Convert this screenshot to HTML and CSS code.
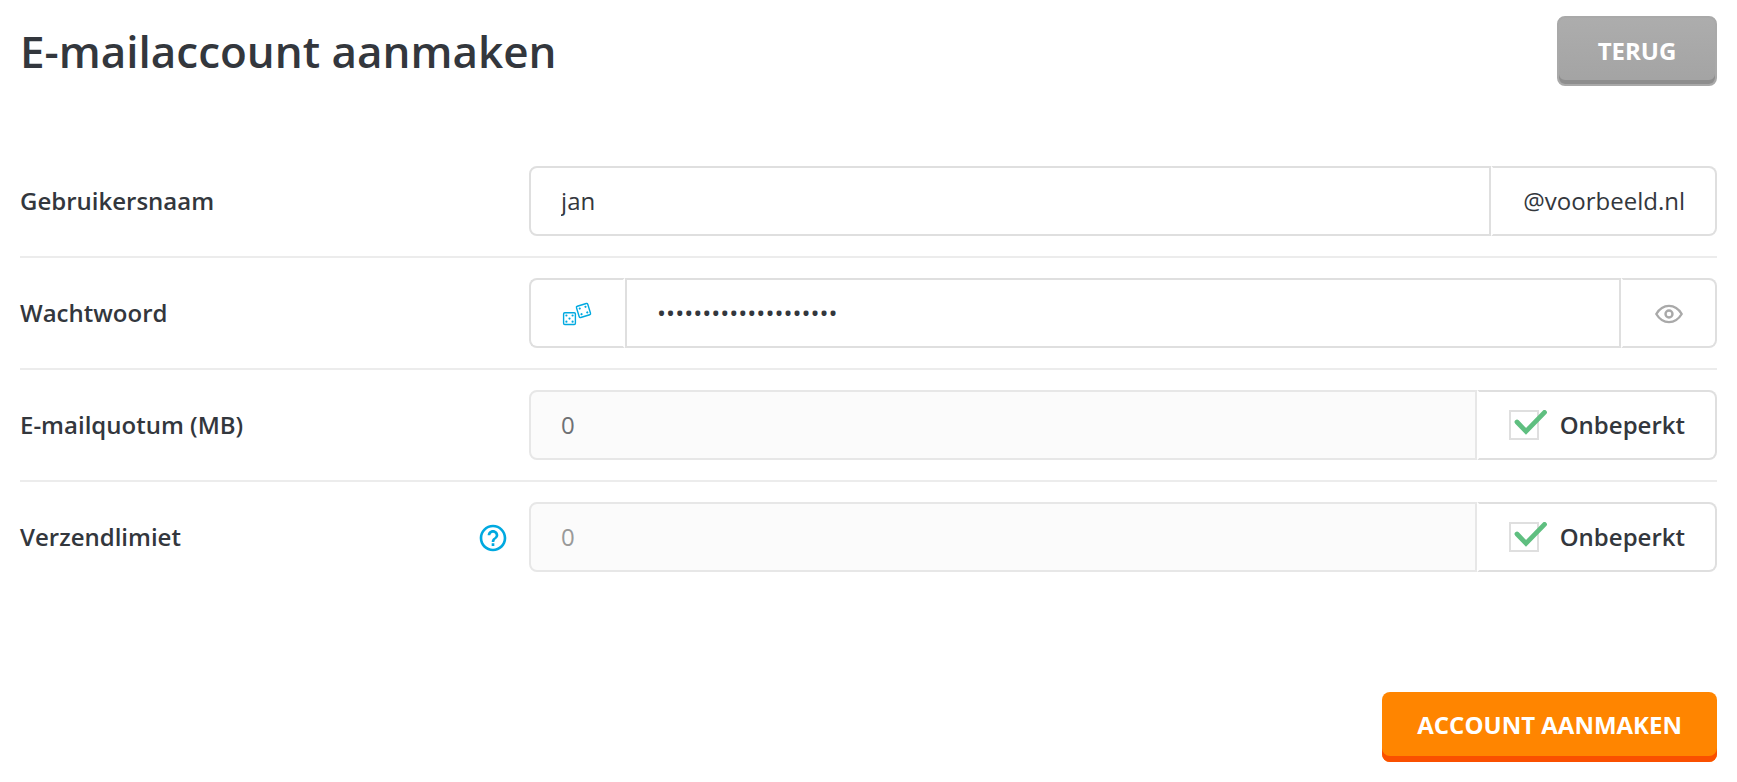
FILE: index.html
```
<!DOCTYPE html>
<html lang="nl">
<head>
    <meta charset="UTF-8">
    <meta name="viewport" content="width=device-width, initial-scale=1.0">
    <title>E-mailaccount aanmaken</title>
    <link rel="stylesheet" href="styles.css">
</head>
<body>
    <div class="page">
        <header class="page-header">
            <h1>E-mailaccount aanmaken</h1>
            <button type="button" class="button grey">TERUG</button>
        </header>
        <form class="account-form">
            <div class="row">
                <div class="row-label">
                    <label class="text" for="username">Gebruikersnaam</label>
                </div>
                <div class="input-group">
                    <input type="text" class="field" id="username" value="jan">
                    <span class="addon last"><span class="text">@voorbeeld.nl</span></span>
                </div>
            </div>
            <div class="row">
                <div class="row-label">
                    <label class="text" for="password">Wachtwoord</label>
                </div>
                <div class="input-group">
                    <button type="button" class="addon first" aria-label="Genereer wachtwoord">
                        <svg class="icon dice" viewBox="0 0 32 32">
                            <rect x="2.6" y="14.7" width="11.8" height="11.8" rx="1.2"/>
                            <g class="dots">
                                <circle cx="5.4" cy="17.5" r="1.1"/>
                                <circle cx="11.6" cy="17.5" r="1.1"/>
                                <circle cx="8.5" cy="20.6" r="1.1"/>
                                <circle cx="5.4" cy="23.7" r="1.1"/>
                                <circle cx="11.6" cy="23.7" r="1.1"/>
                            </g>
                            <g transform="rotate(-17 22.5 12.5)">
                                <rect x="16.6" y="6.6" width="11.8" height="11.8" rx="1.2"/>
                                <g class="dots">
                                    <circle cx="19.5" cy="9.5" r="1.1"/>
                                    <circle cx="25.5" cy="9.5" r="1.1"/>
                                    <circle cx="19.5" cy="15.5" r="1.1"/>
                                    <circle cx="25.5" cy="15.5" r="1.1"/>
                                </g>
                            </g>
                        </svg>
                    </button>
                    <input type="password" class="field middle" id="password" value="wachtwoord1234567890">
                    <button type="button" class="addon last" aria-label="Toon wachtwoord">
                        <svg class="icon eye" viewBox="0 0 32 32">
                            <path d="M3.3 16C6.4 10.8 11 7.9 16 7.9S25.6 10.8 28.7 16C25.6 21.2 21 24.1 16 24.1S6.4 21.2 3.3 16Z"/>
                            <circle cx="16" cy="16" r="3.5"/>
                        </svg>
                    </button>
                </div>
            </div>
            <div class="row">
                <div class="row-label">
                    <label class="text" for="quota">E-mailquotum (MB)</label>
                </div>
                <div class="input-group">
                    <input type="text" class="field" id="quota" value="0" disabled>
                    <label class="addon last check">
                        <span class="checkbox">
                            <input type="checkbox" checked>
                            <svg class="tick" viewBox="0 0 40 30"><path d="M8 12L17 21.4L35.5 2.4"/></svg>
                        </span>
                        <span class="text">Onbeperkt</span>
                    </label>
                </div>
            </div>
            <div class="row">
                <div class="row-label">
                    <label class="text" for="limit">Verzendlimiet</label>
                    <button type="button" class="help" aria-label="Uitleg">
                        <svg class="icon" viewBox="0 0 24 24">
                            <path fill="currentColor" d="M11 18h2v-2h-2v2zm1-16C6.480 2 2 6.480 2 12s4.480 10 10 10 10-4.480 10-10S17.520 2 12 2zm0 18c-4.410 0-8-3.590-8-8s3.590-8 8-8 8 3.590 8 8-3.590 8-8 8zm0-14c-2.210 0-4 1.790-4 4h2c0-1.100.9-2 2-2s2 .9 2 2c0 2-3 1.750-3 5h2c0-2.250 3-2.500 3-5 0-2.210-1.790-4-4-4z"/>
                        </svg>
                    </button>
                </div>
                <div class="input-group">
                    <input type="text" class="field" id="limit" placeholder="0" disabled>
                    <label class="addon last check">
                        <span class="checkbox">
                            <input type="checkbox" checked>
                            <svg class="tick" viewBox="0 0 40 30"><path d="M8 12L17 21.4L35.5 2.4"/></svg>
                        </span>
                        <span class="text">Onbeperkt</span>
                    </label>
                </div>
            </div>
            <div class="actions">
                <button type="submit" class="button orange">ACCOUNT AANMAKEN</button>
            </div>
        </form>
    </div>
</body>
</html>
```
FILE: styles.css
```
* {
    box-sizing: border-box;
}
body {
    margin: 0;
    background-color: #fff;
    color: #33373d;
    font-family: "Open Sans", sans-serif;
    font-size: 24px;
}
input,
button {
    font: inherit;
    color: inherit;
    margin: 0;
}
.page {
    padding: 16px 20px 20px;
}
.page-header {
    display: flex;
    justify-content: space-between;
    align-items: center;
    margin-bottom: 60px;
}
h1 {
    margin: 0;
    font-size: 44px;
    font-weight: 600;
    line-height: 70px;
}
.button {
    height: 70px;
    min-width: 160px;
    padding: 0 35px 6px;
    border: none;
    border-radius: 8px;
    color: #fff;
    font-weight: 700;
    cursor: pointer;
}
.button.grey {
    padding-bottom: 2px;
    border: 2px solid #a9a9a9;
    background: linear-gradient(#adadad, #a3a3a3) border-box;
    box-shadow: inset 0 -4px 0 #8e8e8e;
}
.button.orange {
    background-color: #ff8500;
    box-shadow: inset 0 -6px 0 #fa5000;
}
.row {
    display: flex;
    padding: 20px 0;
    border-bottom: 2px solid #ececec;
}
.row:nth-child(4) {
    border-bottom: none;
}
.row-label {
    flex: 0 0 30%;
    display: flex;
    justify-content: space-between;
    align-items: center;
    padding-right: 20px;
    font-weight: 600;
}
.text {
    padding-bottom: 2px;
}
.input-group {
    flex: 1;
    display: flex;
    min-width: 0;
    height: 70px;
}
.field {
    flex: 1;
    min-width: 0;
    padding: 0 30px 2px;
    border: 2px solid #dfdfdf;
    border-radius: 8px 0 0 8px;
    background-color: #fff;
    outline: none;
}
.field.middle {
    border-radius: 0;
}
.field:disabled {
    border-color: #e7e7e7;
    background-color: #fbfbfb;
    color: #6e7074;
}
.field::placeholder {
    color: #999;
}
.addon {
    display: flex;
    align-items: center;
    padding: 0 30px;
    border: 2px solid #dfdfdf;
    background-color: #fff;
}
.addon.first {
    border-right-color: #fff;
    border-radius: 8px 0 0 8px;
}
.addon.last {
    border-left-color: #fff;
    border-radius: 0 8px 8px 0;
}
.addon.check {
    gap: 21px;
    font-weight: 600;
}
.icon {
    display: block;
    width: 32px;
    height: 32px;
    margin-top: 2px;
    fill: none;
}
.dice {
    stroke: #00a9e0;
    stroke-width: 1.4;
}
.dots {
    fill: #00a9e0;
    stroke: none;
}
.eye {
    stroke: #a9a9a9;
    stroke-width: 2.4;
    stroke-linejoin: round;
}
.help {
    padding: 0;
    border: none;
    background: none;
    color: #00a9e0;
    cursor: pointer;
}
.checkbox {
    position: relative;
    width: 30px;
    height: 30px;
}
.checkbox input {
    appearance: none;
    display: block;
    width: 30px;
    height: 30px;
    border: 2px solid #dfdfdf;
    background-color: #fff;
}
.tick {
    position: absolute;
    top: 0;
    left: 0;
    width: 40px;
    height: 30px;
    fill: none;
    stroke: #5fbf80;
    stroke-width: 4.8;
    stroke-linecap: round;
    pointer-events: none;
}
.checkbox input:not(:checked) + .tick {
    display: none;
}
.actions {
    display: flex;
    justify-content: flex-end;
    margin-top: 100px;
}
```
